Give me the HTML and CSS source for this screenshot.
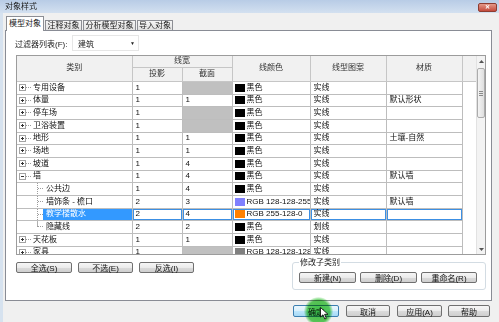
FILE: index.html
```html
<!DOCTYPE html>
<html lang="zh-CN">
<head>
<meta charset="utf-8">
<title>对象样式</title>
<link rel="stylesheet" href="styles.css">
</head>
<body>
<div class="window">
  <div class="titlebar">
    <span class="title">对象样式</span>
    <span class="close">✕</span>
  </div>
  <div class="tabs">
    <div class="tab active t1">模型对象</div>
    <div class="tab t2">注释对象</div>
    <div class="tab t3">分析模型对象</div>
    <div class="tab t4">导入对象</div>
  </div>
  <div class="panel">
    <div class="filter">
      <span class="filter-label">过滤器列表(F):</span>
      <div class="select"><span>建筑</span><span class="caret">▼</span></div>
    </div>
    <div class="gridbox">
      <div class="gridarea">
        <table class="grid">
          <colgroup>
            <col class="c1"><col class="c2"><col class="c3"><col class="c4"><col class="c5"><col class="c6"><col class="c7">
          </colgroup>
          <thead>
            <tr class="h1"><th rowspan="2">类别</th><th colspan="2">线宽</th><th rowspan="2">线颜色</th><th rowspan="2">线型图案</th><th rowspan="2">材质</th><th rowspan="2" class="hblank"></th></tr>
            <tr class="h2"><th>投影</th><th>截面</th></tr>
          </thead>
          <tbody>
            <tr><td class="cat"><div class="tree"><svg class="exp" viewBox="0 0 7 7"><rect x=".5" y=".5" width="6" height="6"/><path d="M2 3.5h3M3.5 2v3"/></svg><i class="hl"></i><span class="lbl">专用设备</span></div></td><td>1</td><td class="dis"></td><td><div class="clr"><i class="sw"></i>黑色</div></td><td>实线</td><td></td><td class="blank"></td></tr>
            <tr><td class="cat"><div class="tree"><svg class="exp" viewBox="0 0 7 7"><rect x=".5" y=".5" width="6" height="6"/><path d="M2 3.5h3M3.5 2v3"/></svg><i class="hl"></i><span class="lbl">体量</span></div></td><td>1</td><td>1</td><td><div class="clr"><i class="sw"></i>黑色</div></td><td>实线</td><td>默认形状</td><td class="blank"></td></tr>
            <tr><td class="cat"><div class="tree"><svg class="exp" viewBox="0 0 7 7"><rect x=".5" y=".5" width="6" height="6"/><path d="M2 3.5h3M3.5 2v3"/></svg><i class="hl"></i><span class="lbl">停车场</span></div></td><td>1</td><td class="dis"></td><td><div class="clr"><i class="sw"></i>黑色</div></td><td>实线</td><td></td><td class="blank"></td></tr>
            <tr><td class="cat"><div class="tree"><svg class="exp" viewBox="0 0 7 7"><rect x=".5" y=".5" width="6" height="6"/><path d="M2 3.5h3M3.5 2v3"/></svg><i class="hl"></i><span class="lbl">卫浴装置</span></div></td><td>1</td><td class="dis"></td><td><div class="clr"><i class="sw"></i>黑色</div></td><td>实线</td><td></td><td class="blank"></td></tr>
            <tr><td class="cat"><div class="tree"><svg class="exp" viewBox="0 0 7 7"><rect x=".5" y=".5" width="6" height="6"/><path d="M2 3.5h3M3.5 2v3"/></svg><i class="hl"></i><span class="lbl">地形</span></div></td><td>1</td><td>1</td><td><div class="clr"><i class="sw"></i>黑色</div></td><td>实线</td><td>土壤-自然</td><td class="blank"></td></tr>
            <tr><td class="cat"><div class="tree"><svg class="exp" viewBox="0 0 7 7"><rect x=".5" y=".5" width="6" height="6"/><path d="M2 3.5h3M3.5 2v3"/></svg><i class="hl"></i><span class="lbl">场地</span></div></td><td>1</td><td>1</td><td><div class="clr"><i class="sw"></i>黑色</div></td><td>实线</td><td></td><td class="blank"></td></tr>
            <tr><td class="cat"><div class="tree"><svg class="exp" viewBox="0 0 7 7"><rect x=".5" y=".5" width="6" height="6"/><path d="M2 3.5h3M3.5 2v3"/></svg><i class="hl"></i><span class="lbl">坡道</span></div></td><td>1</td><td>4</td><td><div class="clr"><i class="sw"></i>黑色</div></td><td>实线</td><td></td><td class="blank"></td></tr>
            <tr><td class="cat"><div class="tree"><svg class="exp" viewBox="0 0 7 7"><rect x=".5" y=".5" width="6" height="6"/><path d="M2 3.5h3"/></svg><i class="hl"></i><span class="lbl">墙</span></div></td><td>1</td><td>4</td><td><div class="clr"><i class="sw"></i>黑色</div></td><td>实线</td><td>默认墙</td><td class="blank"></td></tr>
            <tr><td class="cat"><div class="tree child"><i class="br"></i><span class="lbl">公共边</span></div></td><td>1</td><td>4</td><td><div class="clr"><i class="sw"></i>黑色</div></td><td>实线</td><td></td><td class="blank"></td></tr>
            <tr><td class="cat"><div class="tree child"><i class="br"></i><span class="lbl">墙饰条 - 檐口</span></div></td><td>2</td><td>3</td><td><div class="clr"><i class="sw purple"></i>RGB 128-128-255</div></td><td>实线</td><td>默认墙</td><td class="blank"></td></tr>
            <tr class="selrow"><td class="cat"><div class="tree child"><i class="br"></i><span class="lbl sel">教学楼散水</span></div></td><td class="foc">2</td><td class="foc">4</td><td class="foc"><div class="clr"><i class="sw orange"></i>RGB 255-128-0</div></td><td class="foc">实线</td><td class="foc"></td><td class="blank"></td></tr>
            <tr><td class="cat"><div class="tree child"><i class="br last"></i><span class="lbl">隐藏线</span></div></td><td>2</td><td>2</td><td><div class="clr"><i class="sw"></i>黑色</div></td><td>划线</td><td></td><td class="blank"></td></tr>
            <tr><td class="cat"><div class="tree"><svg class="exp" viewBox="0 0 7 7"><rect x=".5" y=".5" width="6" height="6"/><path d="M2 3.5h3M3.5 2v3"/></svg><i class="hl"></i><span class="lbl">天花板</span></div></td><td>1</td><td>1</td><td><div class="clr"><i class="sw"></i>黑色</div></td><td>实线</td><td></td><td class="blank"></td></tr>
            <tr><td class="cat"><div class="tree"><svg class="exp" viewBox="0 0 7 7"><rect x=".5" y=".5" width="6" height="6"/><path d="M2 3.5h3M3.5 2v3"/></svg><i class="hl"></i><span class="lbl">家具</span></div></td><td>1</td><td class="dis"></td><td><div class="clr"><i class="sw gray"></i>RGB 128-128-128</div></td><td>实线</td><td></td><td class="blank"></td></tr>
          </tbody>
        </table>
      </div>
      <div class="scrollbar">
        <div class="arrow"><svg width="5" height="3" viewBox="0 0 5 3"><path d="M0 3L2.5 0L5 3Z"/></svg></div>
        <div class="thumb"><i class="grip"></i><i class="grip"></i><i class="grip"></i></div>
        <div class="sb-space"></div>
        <div class="arrow"><svg width="5" height="3" viewBox="0 0 5 3"><path d="M0 0L2.5 3L5 0Z"/></svg></div>
      </div>
    </div>
    <div class="lower">
      <div class="left-btns">
        <div class="btn b-all">全选(S)</div>
        <div class="btn b-none">不选(E)</div>
        <div class="btn b-inv">反选(I)</div>
      </div>
      <fieldset class="group">
        <legend>修改子类别</legend>
        <div class="btn g-new">新建(N)</div>
        <div class="btn g-del">删除(D)</div>
        <div class="btn g-ren">重命名(R)</div>
      </fieldset>
    </div>
  </div>
  <div class="footer">
    <div class="btn f-ok">确定</div>
    <div class="btn f-cancel">取消</div>
    <div class="btn f-apply">应用(A)</div>
    <div class="btn f-help">帮助</div>
  </div>
  <div class="glow"></div>
  <svg class="cursor" width="9" height="13" viewBox="0 0 9 13"><path d="M0.5 0.5L0.5 10L3 7.8L4.8 12L6.3 11.3L4.6 7.3L8 7.3Z" fill="#fff" stroke="#000" stroke-width="0.8"/></svg>
</div>
</body>
</html>
```

FILE: styles.css
```css
* { box-sizing: border-box; }
html, body { margin: 0; padding: 0; }
body {
  width: 499px;
  height: 322px;
  overflow: hidden;
  background: #f0f0f0;
  font-family: "Liberation Sans", "Noto Sans CJK SC", sans-serif;
  font-size: 8px;
  color: #1a1a1a;
}
.window {
  position: relative;
  height: 322px;
  box-shadow: inset 3px 0 0 #d6e2ef;
}
.titlebar {
  height: 13px;
  display: flex;
  justify-content: space-between;
  align-items: flex-start;
  padding-left: 5px;
  background: linear-gradient(#b8cce6, #d3e0f0);
}
.title { line-height: 13px; color: #1b1b1b; }
.close {
  width: 19px;
  height: 9px;
  margin: 3px 2px 0 0;
  background: linear-gradient(#e4998a, #c44a3c);
  border: 1px solid #8e3c31;
  border-radius: 2px;
  color: #fff;
  font-size: 6px;
  line-height: 7px;
  text-align: center;
  font-weight: bold;
}
.tabs {
  display: flex;
  align-items: flex-end;
  height: 14px;
  margin-top: 3px;
  padding-left: 6px;
}
.tab {
  height: 10px;
  margin-right: 1px;
  border: 1px solid #8c8e94;
  border-bottom: none;
  background: linear-gradient(#f5f5f5, #e1e1e1);
  line-height: 9px;
  text-align: center;
  white-space: nowrap;
}
.tab.active {
  height: 15px;
  margin-bottom: -1px;
  background: #fff;
  position: relative;
  z-index: 1;
  line-height: 13px;
}
.t1 { width: 38px; }
.t2 { width: 37px; }
.t3 { width: 53px; }
.t4 { width: 36px; }

.panel {
  height: 271px;
  margin: 0 7px 0 5px;
  border: 1px solid #898c95;
  background: #fff;
  padding: 4px 5px 0 10px;
}
.filter { display: flex; align-items: center; height: 16px; }
.filter-label { width: 57px; margin-left: -1px; white-space: nowrap; }
.select {
  width: 67px;
  height: 16px;
  border: 1px solid #e6e6e6;
  display: flex;
  align-items: center;
  justify-content: space-between;
  padding: 0 3px 0 5px;
}
.caret { font-size: 5px; color: #222; }

.gridbox {
  display: flex;
  width: 470px;
  height: 200px;
  margin-top: 4px;
  border: 1px solid #9c9c9c;
  overflow: hidden;
}
.gridarea { width: 459px; flex: none; overflow: hidden; }
.grid {
  width: 459px;
  table-layout: fixed;
  border-collapse: collapse;
}
.c1 { width: 115px; }
.c2 { width: 50px; }
.c3 { width: 50px; }
.c4 { width: 78px; }
.c5 { width: 76px; }
.c6 { width: 76px; }
.c7 { width: 14px; }
.grid th, .grid td {
  border: 1px solid #bdbdbd;
  padding: 0 0 0 3px;
  line-height: 10px;
  white-space: nowrap;
  overflow: hidden;
  font-weight: normal;
  color: #111;
  text-align: left;
}
.grid th {
  background: #f1f1f1;
  text-align: center;
  padding: 0;
  color: #333;
  border-color: #c6c6c6;
}
.grid tr > :first-child { border-left: none; }
.grid .h1 th { border-top: none; }
.h1 { height: 11px; }
.h2 { height: 14px; }
.grid tbody tr { height: 13px; }
.grid tbody tr:nth-child(3n+2) { height: 12px; }
.grid td.blank { border-top: none; border-bottom: none; border-right: none; background: #fff; }
.grid th.hblank { border-right: none; }
.grid td.dis { background: #c0c0c0; }
.grid td.cat { padding: 0; }
.grid td.foc { box-shadow: inset 0 0 0 1px #3c8fe3; }

.tree { display: flex; align-items: center; height: 11px; padding-left: 2px; }
.exp { width: 7px; height: 7px; flex: none; shape-rendering: crispEdges; }
.exp rect { fill: #fff; stroke: #a3a3a3; }
.exp path { stroke: #333; stroke-width: 1; }
.hl { width: 5px; flex: none; border-top: 1px dotted #9c9c9c; }
.lbl { margin-left: 2px; }
.tree.child { padding-left: 20px; }
.br {
  align-self: stretch;
  width: 6px;
  flex: none;
  border-left: 1px dotted #9c9c9c;
  display: flex;
  align-items: center;
}
.br::after { content: ""; width: 100%; border-top: 1px dotted #9c9c9c; }
.br.last {
  border-left: none;
  background: linear-gradient(#b0b0b0, #b0b0b0) 0 0 / 1px 50% no-repeat;
}
.tree.child .lbl { margin-left: 0; padding-left: 3px; }
.lbl.sel {
  flex: 1;
  align-self: stretch;
  display: flex;
  align-items: center;
  background: #3399ff;
  color: #fff;
}
.clr { display: flex; align-items: center; margin-left: -1px; overflow: hidden; }
.sw { width: 10px; height: 8px; flex: none; background: #000; margin-right: 2px; }
.sw.purple { background: #8080ff; }
.sw.orange { background: #ff8000; }
.sw.gray { background: #808080; }

.scrollbar {
  flex: 1;
  background: #f3f3f3;
  border-left: 1px solid #e2e2e2;
  display: flex;
  flex-direction: column;
  align-items: center;
}
.arrow { height: 10px; display: flex; align-items: center; justify-content: center; }
.arrow path { fill: #555; }
.thumb {
  width: 8px;
  height: 50px;
  margin-top: 2px;
  border: 1px solid #acacac;
  border-radius: 2px;
  background: linear-gradient(90deg, #f4f4f4, #dedede);
  display: flex;
  flex-direction: column;
  justify-content: center;
  align-items: center;
  gap: 1px;
}
.grip { width: 4px; height: 1px; background: #8a8a8a; }
.sb-space { flex: 1; }

.lower { display: flex; align-items: flex-start; margin-top: 7px; }
.left-btns { display: flex; gap: 6px; }
.btn {
  height: 11px;
  border: 1px solid #707070;
  border-radius: 2px;
  background: linear-gradient(#f6f6f6 0%, #ebebeb 50%, #dbdbdb 51%, #cfcfcf 100%);
  display: flex;
  align-items: center;
  justify-content: center;
  font-size: 8px;
  color: #111;
  white-space: nowrap;
}
.b-all { width: 56px; }
.b-none { width: 55px; }
.b-inv { width: 55px; }
.group {
  margin: -4px 0 0 auto;
  min-width: 0;
  border: 1px solid #d3dce3;
  border-radius: 3px;
  padding: 5px 8px 6px 6px;
  display: flex;
  gap: 4px;
}
.group legend { padding: 0 1px; line-height: 9px; font-size: 8px; color: #222; }
.g-new { width: 57px; }
.g-del { width: 57px; }
.g-ren { width: 56px; }

.footer { display: flex; justify-content: flex-end; margin-top: 4px; padding-right: 9px; }
.footer .btn { height: 12px; }
.f-ok {
  width: 46px;
  border-color: #3c7fb1;
  background: linear-gradient(#eaf6fd 0%, #d9f0fc 50%, #bee6fd 51%, #a7d9f5 100%);
}
.f-cancel { width: 44px; margin-left: 7px; }
.f-apply { width: 45px; margin-left: 7px; }
.f-help { width: 42px; margin-left: 6px; }

.glow {
  position: absolute;
  left: 304px;
  top: 297px;
  width: 29px;
  height: 29px;
  border-radius: 50%;
  mix-blend-mode: multiply;
  background: radial-gradient(circle, rgba(70, 200, 70, 1) 0%, rgba(85, 205, 85, 0.95) 55%, rgba(120, 220, 120, 0) 72%);
}
.cursor { position: absolute; left: 320px; top: 307px; }
```
